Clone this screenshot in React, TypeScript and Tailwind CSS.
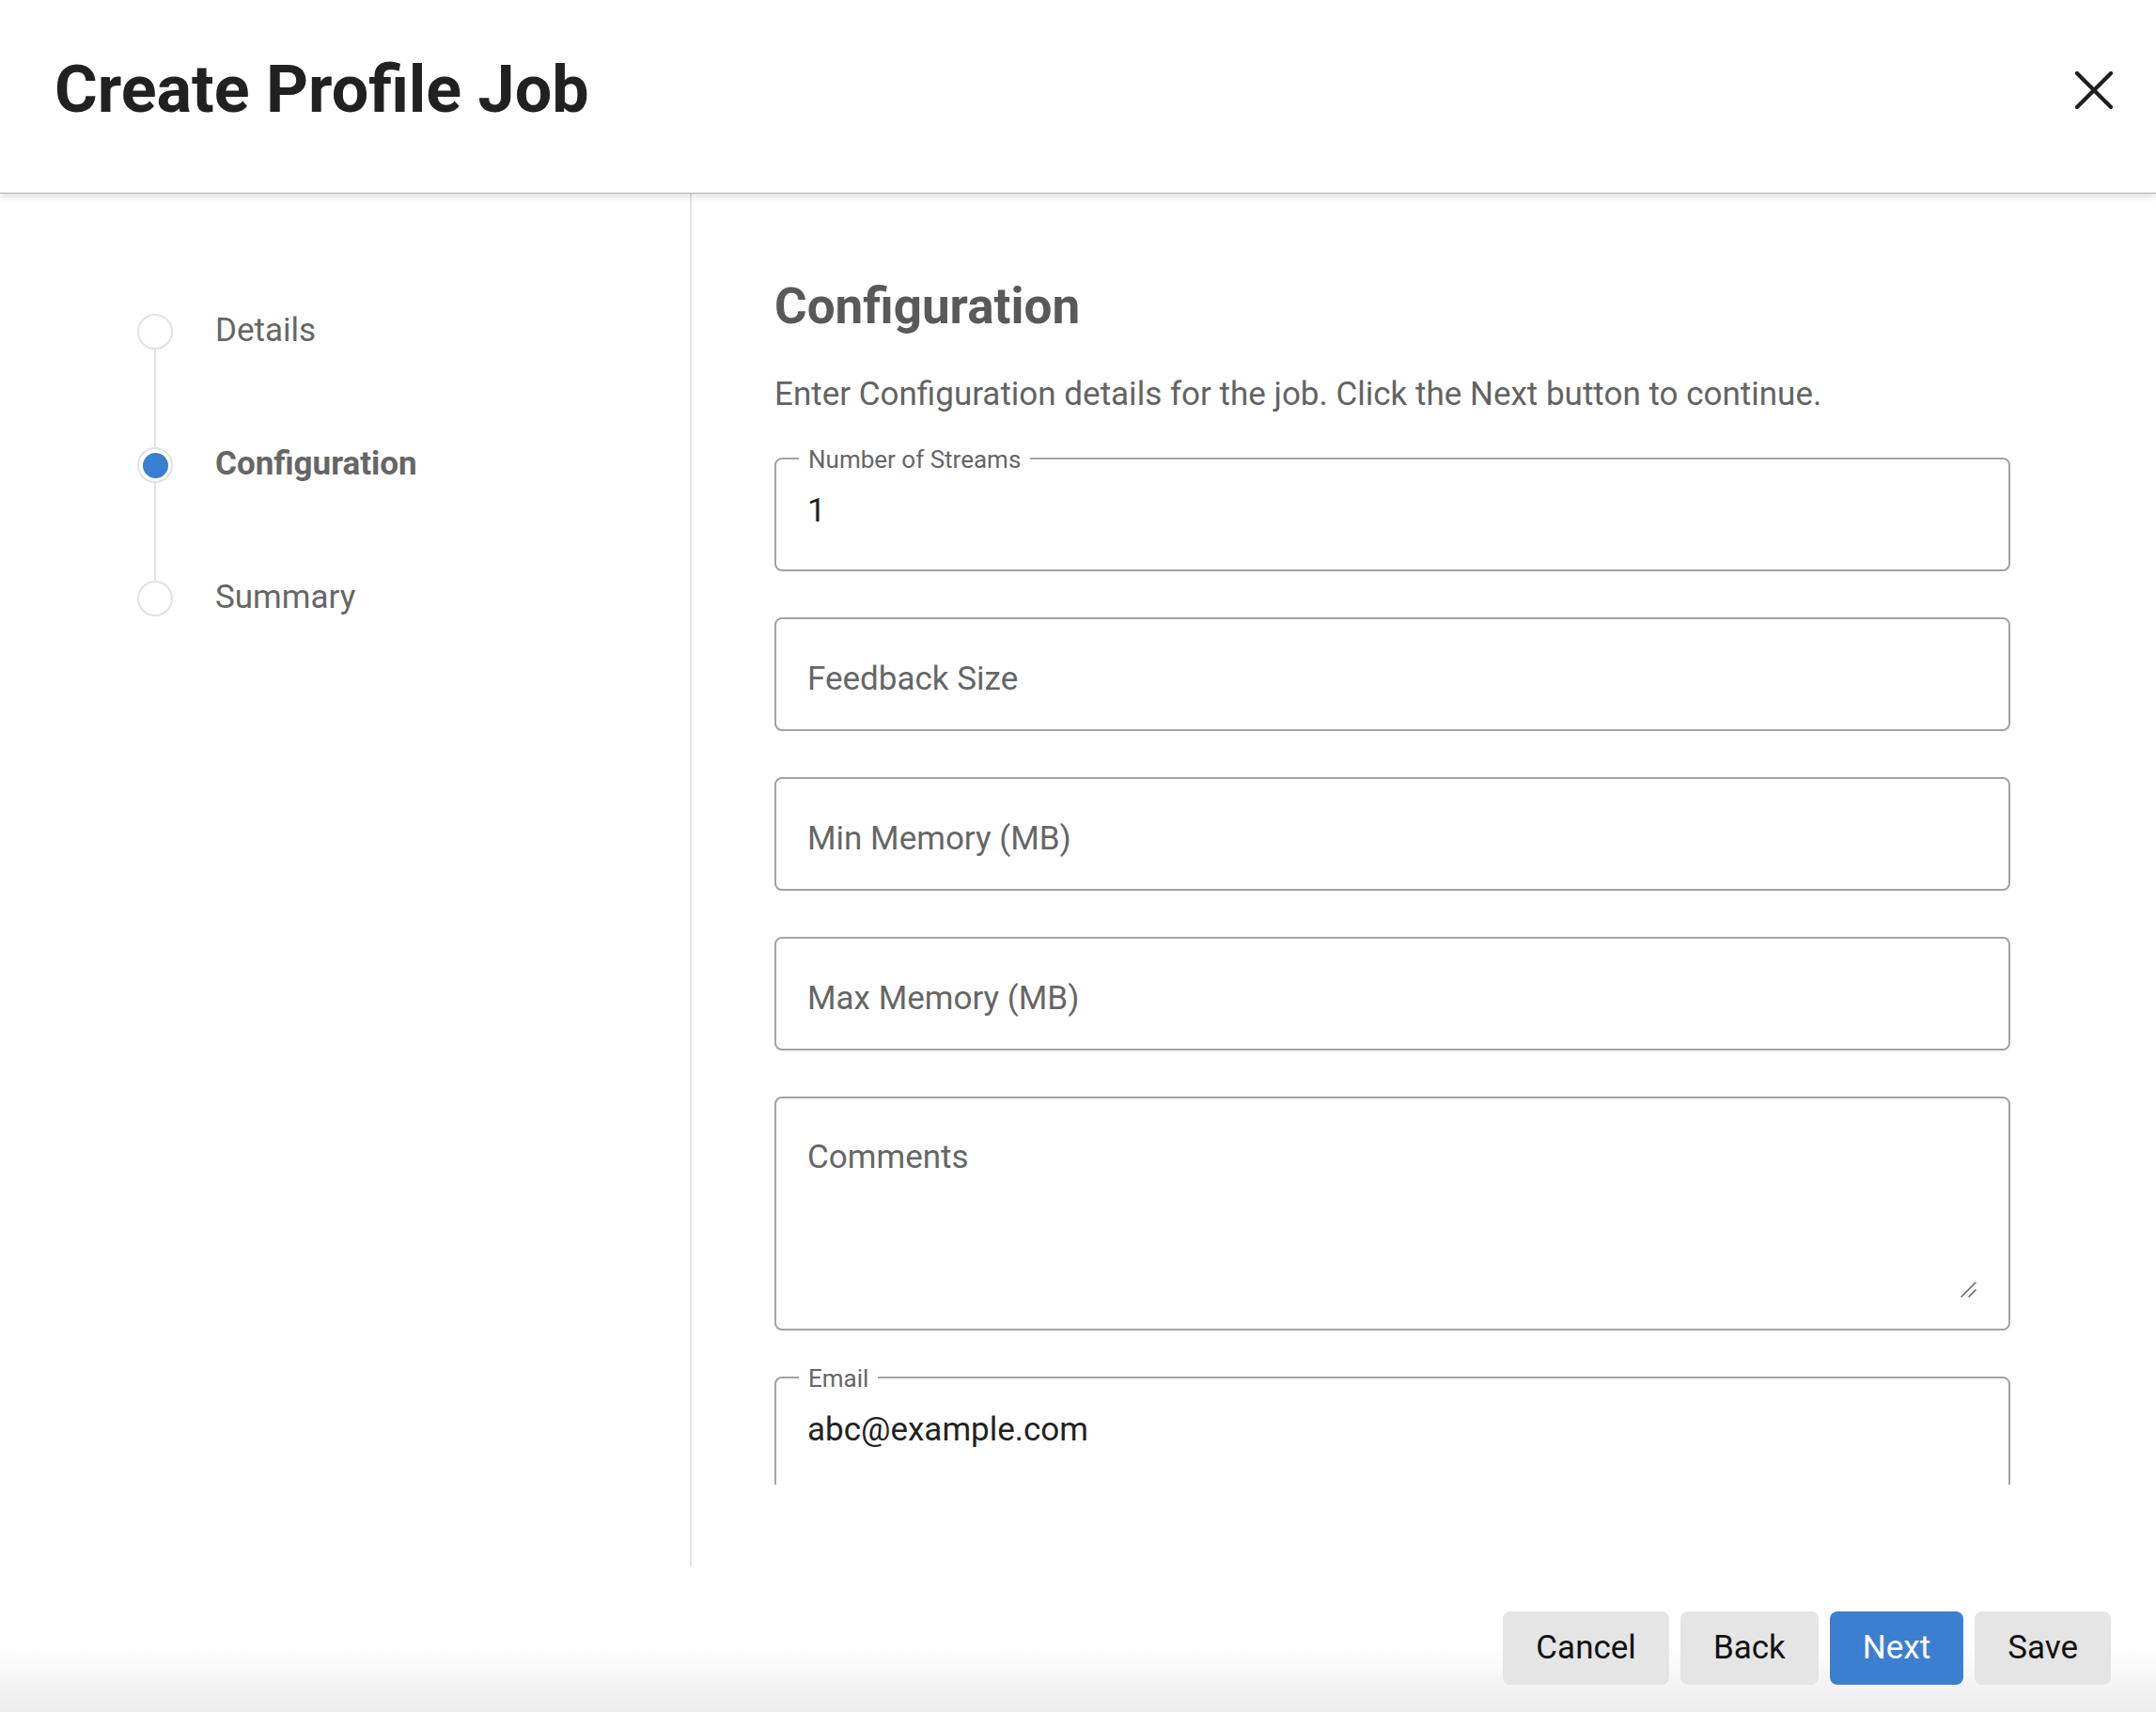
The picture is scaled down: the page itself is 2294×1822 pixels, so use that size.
import React from 'react';

const steps = [
  { label: 'Details', active: false },
  { label: 'Configuration', active: true },
  { label: 'Summary', active: false },
];

function Stepper() {
  return (
    <div className="pl-[146px] pt-[128px]">
      {steps.map((step, i) => (
        <div key={step.label}>
          <div className="flex items-center h-[38px]">
            <div className="w-[38px] h-[38px] rounded-full border-2 border-[#e2e2e2] bg-white flex items-center justify-center shrink-0">
              {step.active && <div className="w-[27px] h-[27px] rounded-full bg-[#3b7fd2]" />}
            </div>
            <span
              className={`ml-[45px] -mt-[2px] text-[35px] leading-[38px] text-[#666666] ${
                step.active ? 'font-bold text-[#5e5e5e]' : ''
              }`}
            >
              {step.label}
            </span>
          </div>
          {i < steps.length - 1 && <div className="ml-[18px] w-[2px] h-[104px] bg-[#e2e2e2]" />}
        </div>
      ))}
    </div>
  );
}

function TextField({ label, value }: { label: string; value?: string }) {
  if (value) {
    return (
      <div className="relative h-[121px] border-2 border-[#a3a3a3] rounded-[8px]">
        <span className="absolute left-[24px] -top-[13px] px-[10px] bg-white text-[26px] leading-[26px] text-[#666666]">
          {label}
        </span>
        <input
          readOnly
          defaultValue={value}
          className="w-full h-full pl-[33px] pr-[33px] pb-[9px] text-[35px] text-[#222222] bg-transparent outline-none"
        />
      </div>
    );
  }
  return (
    <div className="h-[121px] border-2 border-[#a3a3a3] rounded-[8px]">
      <input
        placeholder={label}
        className="w-full h-full pl-[33px] pr-[33px] pt-[9px] text-[35px] text-[#222222] placeholder:text-[#666666] bg-transparent outline-none"
      />
    </div>
  );
}

function CommentsField() {
  return (
    <div className="relative h-[249px] border-2 border-[#a3a3a3] rounded-[8px]">
      <textarea
        placeholder="Comments"
        className="w-full h-full resize-none pl-[33px] pr-[33px] pt-[37px] text-[35px] leading-normal text-[#222222] placeholder:text-[#666666] bg-transparent outline-none"
      />
      <svg
        className="absolute right-[34px] bottom-[33px]"
        width="17"
        height="17"
        viewBox="0 0 17 17"
        fill="none"
        stroke="#666666"
        strokeWidth="1.6"
        strokeLinecap="round"
      >
        <line x1="1" y1="16" x2="16" y2="1" />
        <line x1="9" y1="16" x2="16" y2="9" />
      </svg>
    </div>
  );
}

function FooterButton({ children, primary }: { children: React.ReactNode; primary?: boolean }) {
  return (
    <button
      className={`h-[78px] px-[35px] rounded-[8px] text-[35px] ${
        primary ? 'bg-[#3c7fd1] text-white' : 'bg-[#e5e5e5] text-[#111111]'
      }`}
    >
      {children}
    </button>
  );
}

export default function App() {
  return (
    <div className="w-[2294px] h-[1822px] bg-white flex flex-col overflow-hidden font-['Roboto','Liberation_Sans',sans-serif]">
      <div className="relative z-10 h-[206px] shrink-0 flex items-start justify-between pt-[54px] pl-[58px] pr-[46px] bg-white border-b border-[#b5b5b5] shadow-[0_3px_7px_rgba(0,0,0,0.14)]">
        <h1 className="text-[70px] leading-[83px] font-bold text-[#212121]">Create Profile Job</h1>
        <button className="mt-[22px]" aria-label="Close">
          <svg width="40" height="40" viewBox="0 0 40 40" stroke="#1e1e1e" strokeWidth="4.2" strokeLinecap="round">
            <line x1="2" y1="2" x2="38" y2="38" />
            <line x1="38" y1="2" x2="2" y2="38" />
          </svg>
        </button>
      </div>

      <div className="flex h-[1462px] shrink-0">
        <div className="w-[736px] shrink-0 border-r-2 border-[#e3e3e3]">
          <Stepper />
        </div>

        <div className="flex-1 flex flex-col pb-[88px]">
          <div className="flex-1 overflow-hidden pl-[88px] pr-[155px] pt-[89px]">
            <h2 className="text-[53px] leading-[62px] font-bold text-[#595959]">Configuration</h2>
            <p className="mt-[43px] text-[35px] leading-[40px] text-[#636363]">
              Enter Configuration details for the job. Click the Next button to continue.
            </p>
            <div className="mt-[47px] flex flex-col gap-[49px]">
              <TextField label="Number of Streams" value="1" />
              <TextField label="Feedback Size" />
              <TextField label="Min Memory (MB)" />
              <TextField label="Max Memory (MB)" />
              <CommentsField />
              <TextField label="Email" value="abc@example.com" />
            </div>
          </div>
        </div>
      </div>

      <div className="flex-1 flex justify-end items-start gap-[12px] pt-[47px] pr-[48px] bg-linear-to-b from-white from-55% to-[#ececec]">
        <FooterButton>Cancel</FooterButton>
        <FooterButton>Back</FooterButton>
        <FooterButton primary>Next</FooterButton>
        <FooterButton>Save</FooterButton>
      </div>
    </div>
  );
}
